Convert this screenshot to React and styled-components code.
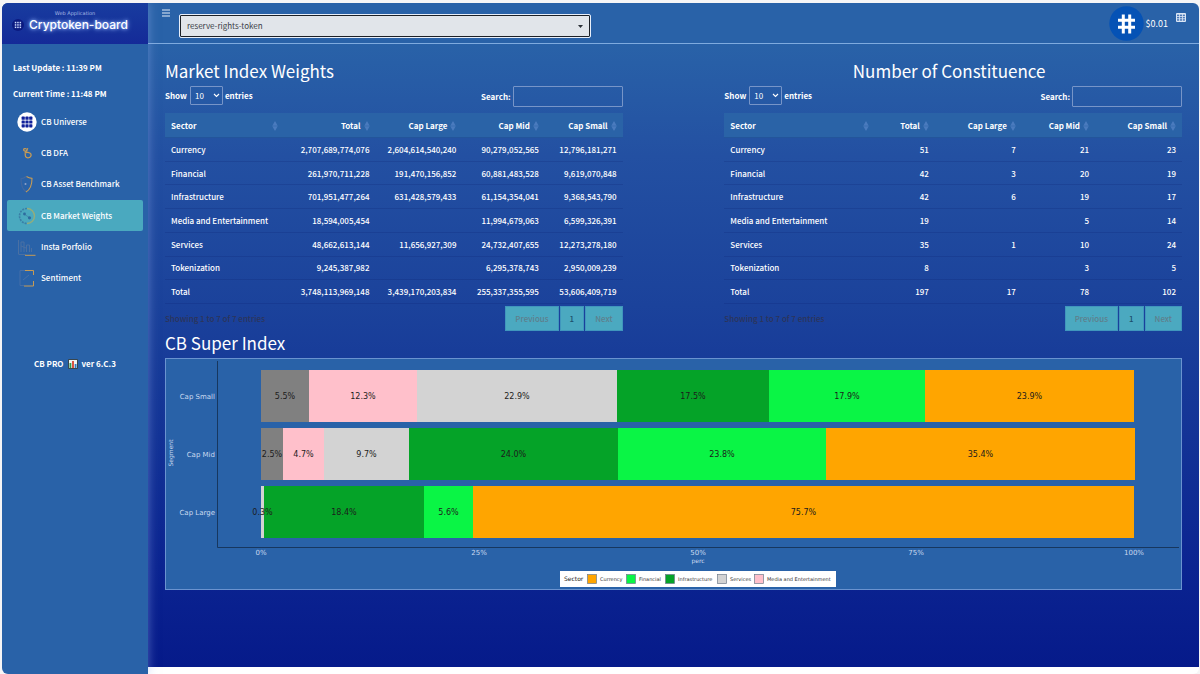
import React from 'react';
import styled, { createGlobalStyle } from 'styled-components';

const GlobalStyle = createGlobalStyle`
  * { box-sizing: border-box; }
  body {
    margin: 0;
    background: #f6f5f6;
    color: #fff;
    font: 8px/12px "Noto Sans CJK SC", "Noto Sans", sans-serif;
  }
  button, input, select { font: inherit; color: inherit; }
`;

const Shell = styled.div`
  display: grid;
  grid-template-columns: 146px 1fr;
  min-height: calc(100vh - 3px);
  margin: 3px 1px 0 2px;
  border-radius: 6px;
  background: #fff;
  overflow: hidden;
`;

/* ---------- sidebar ---------- */

const Sidebar = styled.aside`
  position: relative;
  z-index: 1;
  background: #2962a8;
  box-shadow: 0 0 10px rgba(150, 175, 235, 0.5);
`;

const Brand = styled.a`
  display: flex;
  flex-direction: column;
  height: 41px;
  padding: 7px 10px 0;
  background: linear-gradient(#183c9f, #142a98);
  color: #fff;
  text-decoration: none;
`;

const BrandTag = styled.small`
  align-self: center;
  color: #a9bbe6;
  font: 5px/7px "DejaVu Sans", sans-serif;
`;

const BrandName = styled.span`
  display: flex;
  align-items: center;
  gap: 5px;
  font: 500 12px/16px Inter, sans-serif;
  text-shadow: 0 0 5px #9fc0ff, 0 0 3px #6f98f0;
`;

const Clock = styled.div`
  display: grid;
  gap: 14px;
  padding: 18px 11px 6px;
  font-weight: 700;
`;

const Nav = styled.nav`
  display: grid;
  grid-auto-rows: 1fr;
  height: 188px;
  padding: 0 5px;
`;

const NavLink = styled.a`
  display: flex;
  align-items: center;
  gap: 4px;
  padding-left: 10px;
  border-radius: 2px;
  background: ${p => (p.$active ? '#4aa9bf' : 'transparent')};
  color: #fff;
  font-weight: 500;
  text-decoration: none;
`;

const Version = styled.div`
  display: flex;
  align-items: center;
  justify-content: center;
  gap: 4px;
  margin-top: 64px;
  font-weight: 700;
`;

/* ---------- header ---------- */

const Page = styled.div`
  display: flex;
  flex-direction: column;
  padding-bottom: 7px;
`;

const Header = styled.header`
  display: flex;
  align-items: flex-start;
  height: 41px;
  padding: 0 13px 0 14px;
  border-bottom: 1px solid #7fabdf;
  background: #2962a8;
`;

const IconButton = styled.button`
  display: flex;
  padding: 0;
  margin-top: ${p => p.$top}px;
  border: 0;
  background: none;
`;

const TokenPicker = styled.div`
  display: grid;
  align-items: center;
  width: 40%;
  height: 22px;
  margin: 12px 0 0 10px;

  > * { grid-area: 1 / 1; }
  > svg { justify-self: end; margin-right: 7px; pointer-events: none; }
`;

const TokenSelect = styled.select`
  width: 100%;
  height: 100%;
  padding: 0 6px;
  appearance: none;
  border: 1px solid #1c2026;
  border-radius: 1px;
  outline: 1px solid #e8effa;
  background: #e1e5ea;
  color: #3a4048;
  font-size: 8px;
`;

const Price = styled.div`
  display: flex;
  align-items: center;
  gap: 2px;
  margin: 3px 8px 0 auto;
  font-size: 9px;
`;

/* ---------- content ---------- */

const Content = styled.main`
  flex: 1;
  padding: 15px 17px 16px;
  background: linear-gradient(#2962a8, #2350a2 18%, #1b429b 42%, #0b2491 84%, #061a8a);
`;

const Columns = styled.div`
  display: grid;
  grid-template-columns: 45% 45%;
  justify-content: space-between;
`;

const Title = styled.h2`
  margin: 0;
  padding-right: ${p => (p.$center ? 8 : 0)}px;
  font-size: 17px;
  font-weight: 400;
  line-height: 23px;
  text-align: ${p => (p.$center ? 'center' : 'left')};
`;

const Controls = styled.div`
  display: flex;
  justify-content: space-between;
  align-items: flex-start;
  height: 31px;
  padding-top: 4px;
  font-weight: 700;
`;

const Control = styled.label`
  display: flex;
  align-items: center;
  gap: 2px;
`;

const LengthPicker = styled.span`
  display: grid;
  align-items: center;
  margin-left: 1px;

  > * { grid-area: 1 / 1; }
  > svg { justify-self: end; margin-right: 3px; pointer-events: none; }
`;

const LengthSelect = styled.select`
  width: 33px;
  height: 19px;
  padding: 0 0 0 4px;
  appearance: none;
  border: 1px solid #7795c8;
  border-radius: 1px;
  background: transparent;
  font-weight: 400;
`;

const SearchInput = styled.input`
  width: 110px;
  height: 21px;
  border: 1px solid #7795c8;
  border-radius: 1px;
  background: transparent;
`;

const Table = styled.table`
  width: 100%;
  height: 191px;
  table-layout: fixed;
  border-collapse: separate;
  border-spacing: 0;

  th, td {
    padding: 1px 6px 0;
    border-bottom: 1px solid rgba(10, 30, 110, 0.2);
    text-align: right;
    white-space: nowrap;
  }
  th:first-child, td:first-child { text-align: left; }
  th { height: 25px; background: #2a63a7; font-weight: 700; }
  td { font-weight: 500; }
`;

const HeadCell = styled.span`
  display: flex;
  align-items: center;
  justify-content: ${p => (p.$first ? 'space-between' : 'flex-end')};
  gap: 3px;
`;

const TableFoot = styled.div`
  display: flex;
  justify-content: space-between;
  align-items: center;
  margin-top: 2px;
  color: #2c3459;
  font-weight: 500;
`;

const Pager = styled.div`
  display: flex;
  gap: 1px;
`;

const PageButton = styled.button`
  height: 25px;
  padding: 0 9px;
  border: 1px solid #4096bd;
  background: #4ba9c0;
  color: ${p => (p.$current ? '#1d4f6c' : '#5f7f8c')};
`;

const Chart = styled.svg`
  display: block;
  width: 100%;
  margin-top: 4px;
  border: 1px solid #6a93d0;
  background: #2962a8;
  font-family: "DejaVu Sans", sans-serif;
`;

/* ---------- icons ---------- */

const dots = [0, 1, 2].flatMap(r => [0, 1, 2].map(c => [c, r]));

const LogoMark = () => (
  <svg width="12" height="12" viewBox="0 0 12 12">
    <circle cx="6" cy="6" r="6" fill="#0b1a80" />
    {dots.map(([c, r]) => (
      <rect key={`${c}${r}`} x={2.8 + c * 2.4} y={2.8 + r * 2.4} width="1.5" height="1.5" fill="#cfdcff" />
    ))}
  </svg>
);

const UniverseIcon = () => (
  <svg width="20" height="20" viewBox="0 0 20 20">
    <circle cx="10" cy="10" r="9.7" fill="#fff" />
    {dots.map(([c, r]) => (
      <rect key={`${c}${r}`} x={4.6 + c * 3.8} y={4.6 + r * 3.8} width="3.2" height="3.2" rx=".6" fill="#10209a" />
    ))}
  </svg>
);

const DfaIcon = () => (
  <svg width="20" height="20" viewBox="0 0 20 20" fill="none" stroke="#c79b54" strokeWidth="1.3">
    <path d="M10.500 7.500C9 8.600 6.600 8.200 6.600 6.800c0-1.200 1.800-1.400 2.900-.8M10.800 5.200 8.600 9.500" />
    <path d="M7.500 10.200c1.800-1.200 5.400-1.400 6.400.9.800 2-.8 3.700-2.900 3.700-2.100 0-3.300-1.700-2.600-4.300" />
  </svg>
);

const BenchmarkIcon = () => (
  <svg width="20" height="20" viewBox="0 0 20 20" fill="none" strokeWidth="1.1">
    <path d="M9 2.500c-1.500 1.500-3 2-5 2.200 0 5.500.5 10 5 13" stroke="#4468a0" />
    <path d="M9.500 2.500c1.800 1.200 3.500 1.700 5.500 1.900 0 5.500-.8 10.500-6 13.600" stroke="#c79b54" />
    <circle cx="8.500" cy="10" r="1" fill="#8fa0c8" />
  </svg>
);

const WeightsIcon = () => (
  <svg width="20" height="20" viewBox="0 0 20 20" fill="none">
    <path d="M10 2.500a7.500 7.500 0 0 0 0 15" stroke="#3b7fa6" strokeWidth="1.600" strokeDasharray="2 1" />
    <path d="M10 2.500a7.500 7.500 0 0 1 0 15" stroke="#93ad7c" strokeWidth="1.500" />
    <path d="m7 8 6 4" stroke="#3f83a5" strokeWidth=".8" />
    <circle cx="7.500" cy="8" r="1.400" fill="#2d6b9f" />
    <circle cx="12.500" cy="11.800" r="1.600" fill="#2d6b9f" />
  </svg>
);

const PortfolioIcon = () => (
  <svg width="20" height="20" viewBox="0 0 20 20" fill="none" stroke="#4a70a3" strokeWidth="1">
    <path d="M1.500 3v14M4 15V5h3v10M9.500 15V8h3v7M14.500 15v-4M4 9l5 2" />
    <path d="M1.500 17.500h7" />
    <path d="M8 18.300h10.500" stroke="#c79b54" />
  </svg>
);

const SentimentIcon = () => (
  <svg width="20" height="20" viewBox="0 0 20 20" fill="none" stroke="#466fa8" strokeWidth="1">
    <path d="M8 2.500H3v15h4" />
    <path d="m6 12 6-5" />
    <path d="M8 2.500h8.500V7M16.500 13v5H7" stroke="#c79b54" />
  </svg>
);

const ChartEmoji = () => (
  <svg width="10" height="10" viewBox="0 0 10 10">
    <rect width="10" height="10" rx="1" fill="#39464e" />
    <rect x="1" y="1" width="8" height="8" fill="#eef2f2" />
    <rect x="1.500" y="4" width="1.800" height="5" fill="#2e9b4f" />
    <rect x="4.100" y="2" width="1.800" height="7" fill="#d8432f" />
    <rect x="6.700" y="5" width="1.800" height="4" fill="#2f7fc4" />
  </svg>
);

const MenuIcon = () => (
  <svg width="8" height="8" viewBox="0 0 8 8" stroke="#e3ecf8">
    <path d="M0 1h8M0 4h8M0 7h8" />
  </svg>
);

const TokenIcon = () => (
  <svg width="35" height="35" viewBox="0 0 35 35">
    <circle cx="17.500" cy="17.500" r="17.200" fill="#0552b5" />
    <path d="M14.300 8.500v19M20.700 8.500v19M9 14.300h17M9 21.300h17" stroke="#fff" strokeWidth="3" />
  </svg>
);

const GridIcon = () => (
  <svg width="10" height="9" viewBox="0 0 10 9">
    <rect width="10" height="9" rx="1" fill="#dbe6f5" />
    {dots.map(([c, r]) => (
      <rect key={`${c}${r}`} x={1 + c * 2.9} y={1.6 + r * 2.300} width="2.100" height="1.500" fill="#4a78b8" />
    ))}
  </svg>
);

const ChevronIcon = () => (
  <svg width="7" height="5" viewBox="0 0 7 5">
    <path d="m1 1 2.500 2.500L6 1" fill="none" stroke="#fff" strokeWidth="1.100" />
  </svg>
);

const SortIcon = () => (
  <svg width="6" height="10" viewBox="0 0 6 10" fill="#4a7bbe">
    <path d="M3 0 5.700 4.700H.3zM3 10 .3 5.300h5.400z" />
  </svg>
);

/* ---------- data ---------- */

const navItems = [
  ['CB Universe', UniverseIcon],
  ['CB DFA', DfaIcon],
  ['CB Asset Benchmark', BenchmarkIcon],
  ['CB Market Weights', WeightsIcon],
  ['Insta Porfolio', PortfolioIcon],
  ['Sentiment', SentimentIcon],
];

const heads = ['Sector', 'Total', 'Cap Large', 'Cap Mid', 'Cap Small'];

const weights = [
  ['Currency', '2,707,689,774,076', '2,604,614,540,240', '90,279,052,565', '12,796,181,271'],
  ['Financial', '261,970,711,228', '191,470,156,852', '60,881,483,528', '9,619,070,848'],
  ['Infrastructure', '701,951,477,264', '631,428,579,433', '61,154,354,041', '9,368,543,790'],
  ['Media and Entertainment', '18,594,005,454', '', '11,994,679,063', '6,599,326,391'],
  ['Services', '48,662,613,144', '11,656,927,309', '24,732,407,655', '12,273,278,180'],
  ['Tokenization', '9,245,387,982', '', '6,295,378,743', '2,950,009,239'],
  ['Total', '3,748,113,969,148', '3,439,170,203,834', '255,337,355,595', '53,606,409,719'],
];

const counts = [
  ['Currency', '51', '7', '21', '23'],
  ['Financial', '42', '3', '20', '19'],
  ['Infrastructure', '42', '6', '19', '17'],
  ['Media and Entertainment', '19', '', '5', '14'],
  ['Services', '35', '1', '10', '24'],
  ['Tokenization', '8', '', '3', '5'],
  ['Total', '197', '17', '78', '102'],
];

const GREY = '#808080';
const PINK = '#ffc0cb';
const SILVER = '#d3d3d3';
const GREEN = '#05a328';
const LIME = '#0af545';
const ORANGE = '#ffa500';

// each bar: colour, start x, end x, label
const bars = [
  { name: 'Cap Small', y: 11, parts: [
    [GREY, 95, 143, '5.5%'], [PINK, 143, 251, '12.3%'], [SILVER, 251, 451, '22.9%'],
    [GREEN, 451, 603, '17.5%'], [LIME, 603, 759, '17.9%'], [ORANGE, 759, 968, '23.9%'],
  ] },
  { name: 'Cap Mid', y: 69, parts: [
    [GREY, 95, 117, '2.5%'], [PINK, 117, 158, '4.7%'], [SILVER, 158, 243, '9.7%'],
    [GREEN, 243, 452, '24.0%'], [LIME, 452, 660, '23.8%'], [ORANGE, 660, 969, '35.4%'],
  ] },
  { name: 'Cap Large', y: 127, parts: [
    [SILVER, 95, 98, '0.3%'], [GREEN, 98, 258, '18.4%'], [LIME, 258, 307, '5.6%'],
    [ORANGE, 307, 968, '75.7%'],
  ] },
];

const ticks = [['0%', 95], ['25%', 313], ['50%', 532], ['75%', 750], ['100%', 968]];

const legend = [
  ['Currency', ORANGE, 421], ['Financial', LIME, 460], ['Infrastructure', GREEN, 499],
  ['Services', SILVER, 551], ['Media and Entertainment', PINK, 588],
];

/* ---------- parts ---------- */

const DataPanel = ({ id, title, center, widths, rows }) => (
  <section>
    <Title $center={center}>{title}</Title>
    <Controls>
      <Control htmlFor={`${id}-length`}>
        Show
        <LengthPicker>
          <LengthSelect id={`${id}-length`} defaultValue="10">
            <option>10</option>
            <option>25</option>
            <option>50</option>
          </LengthSelect>
          <ChevronIcon />
        </LengthPicker>
        entries
      </Control>
      <Control htmlFor={`${id}-search`}>
        Search:
        <SearchInput id={`${id}-search`} type="search" />
      </Control>
    </Controls>
    <Table>
      <colgroup>
        {widths.map((w, i) => <col key={i} style={{ width: `${w}%` }} />)}
      </colgroup>
      <thead>
        <tr>
          {heads.map((h, i) => (
            <th key={h} scope="col">
              <HeadCell $first={i === 0}>{h}<SortIcon /></HeadCell>
            </th>
          ))}
        </tr>
      </thead>
      <tbody>
        {rows.map(row => (
          <tr key={row[0]}>
            {row.map((cell, i) => <td key={i}>{cell}</td>)}
          </tr>
        ))}
      </tbody>
    </Table>
    <TableFoot>
      <span>Showing 1 to 7 of 7 entries</span>
      <Pager>
        <PageButton disabled>Previous</PageButton>
        <PageButton $current>1</PageButton>
        <PageButton disabled>Next</PageButton>
      </Pager>
    </TableFoot>
  </section>
);

const SuperIndexChart = () => (
  <Chart viewBox="0 0 1015 230" role="img" aria-label="CB Super Index">
    {bars.map(bar => (
      <g key={bar.name}>
        {bar.parts.map(([fill, x1, x2]) => (
          <rect key={x1} x={x1} y={bar.y} width={x2 - x1} height="52" fill={fill} />
        ))}
        {bar.parts.map(([, x1, x2, label]) => (
          <text key={x1} x={(x1 + x2) / 2} y={bar.y + 29} fontSize="8" fill="#1c1c1c" textAnchor="middle">{label}</text>
        ))}
        <text x="49" y={bar.y + 29} fontSize="7" fill="#c9daf0" textAnchor="end">{bar.name}</text>
      </g>
    ))}
    <path d="M51.500 2v186.500H1013" fill="none" stroke="#17375f" />
    <text transform="translate(7 94) rotate(-90)" fontSize="6" fill="#c9daf0" textAnchor="middle">Segment</text>
    {ticks.map(([label, x]) => (
      <text key={label} x={x} y="196" fontSize="7" fill="#c9daf0" textAnchor="middle">{label}</text>
    ))}
    <text x="532" y="204" fontSize="6" fill="#c9daf0" textAnchor="middle">perc</text>
    <rect x="394" y="212" width="276" height="16" fill="#fff" />
    <text x="398" y="222" fontSize="6" fill="#222">Sector</text>
    {legend.map(([label, fill, x]) => (
      <g key={label}>
        <rect x={x + 0.500} y="215.500" width="9" height="9" fill={fill} stroke="#6f7d8c" strokeWidth=".7" />
        <text x={x + 13} y="222" fontSize="5" fill="#333">{label}</text>
      </g>
    ))}
  </Chart>
);

export default function App() {
  return (
    <>
      <GlobalStyle />
      <Shell>
        <Sidebar>
          <Brand href="#">
            <BrandTag>Web Application</BrandTag>
            <BrandName><LogoMark />Cryptoken-board</BrandName>
          </Brand>
          <Clock>
            <span>Last Update : 11:39 PM</span>
            <span>Current Time : 11:48 PM</span>
          </Clock>
          <Nav>
            {navItems.map(([label, Icon]) => (
              <NavLink key={label} href="#" $active={label === 'CB Market Weights'}>
                <Icon />{label}
              </NavLink>
            ))}
          </Nav>
          <Version>CB PRO <ChartEmoji /> ver 6.C.3</Version>
        </Sidebar>
        <Page>
          <Header>
            <IconButton $top={6} aria-label="Toggle menu"><MenuIcon /></IconButton>
            <TokenPicker>
              <TokenSelect aria-label="Token" defaultValue="reserve-rights-token">
                <option>reserve-rights-token</option>
              </TokenSelect>
              <svg width="5" height="3" viewBox="0 0 5 3"><path d="M0 0h5L2.500 3z" fill="#2b3037" /></svg>
            </TokenPicker>
            <Price><TokenIcon />$0.01</Price>
            <IconButton $top={10} aria-label="Table view"><GridIcon /></IconButton>
          </Header>
          <Content>
            <Columns>
              <DataPanel id="weights" title="Market Index Weights" widths={[26, 20, 19, 18, 17]} rows={weights} />
              <DataPanel id="counts" title="Number of Constituence" center widths={[33, 13, 19, 16, 19]} rows={counts} />
            </Columns>
            <Title>CB Super Index</Title>
            <SuperIndexChart />
          </Content>
        </Page>
      </Shell>
    </>
  );
}
